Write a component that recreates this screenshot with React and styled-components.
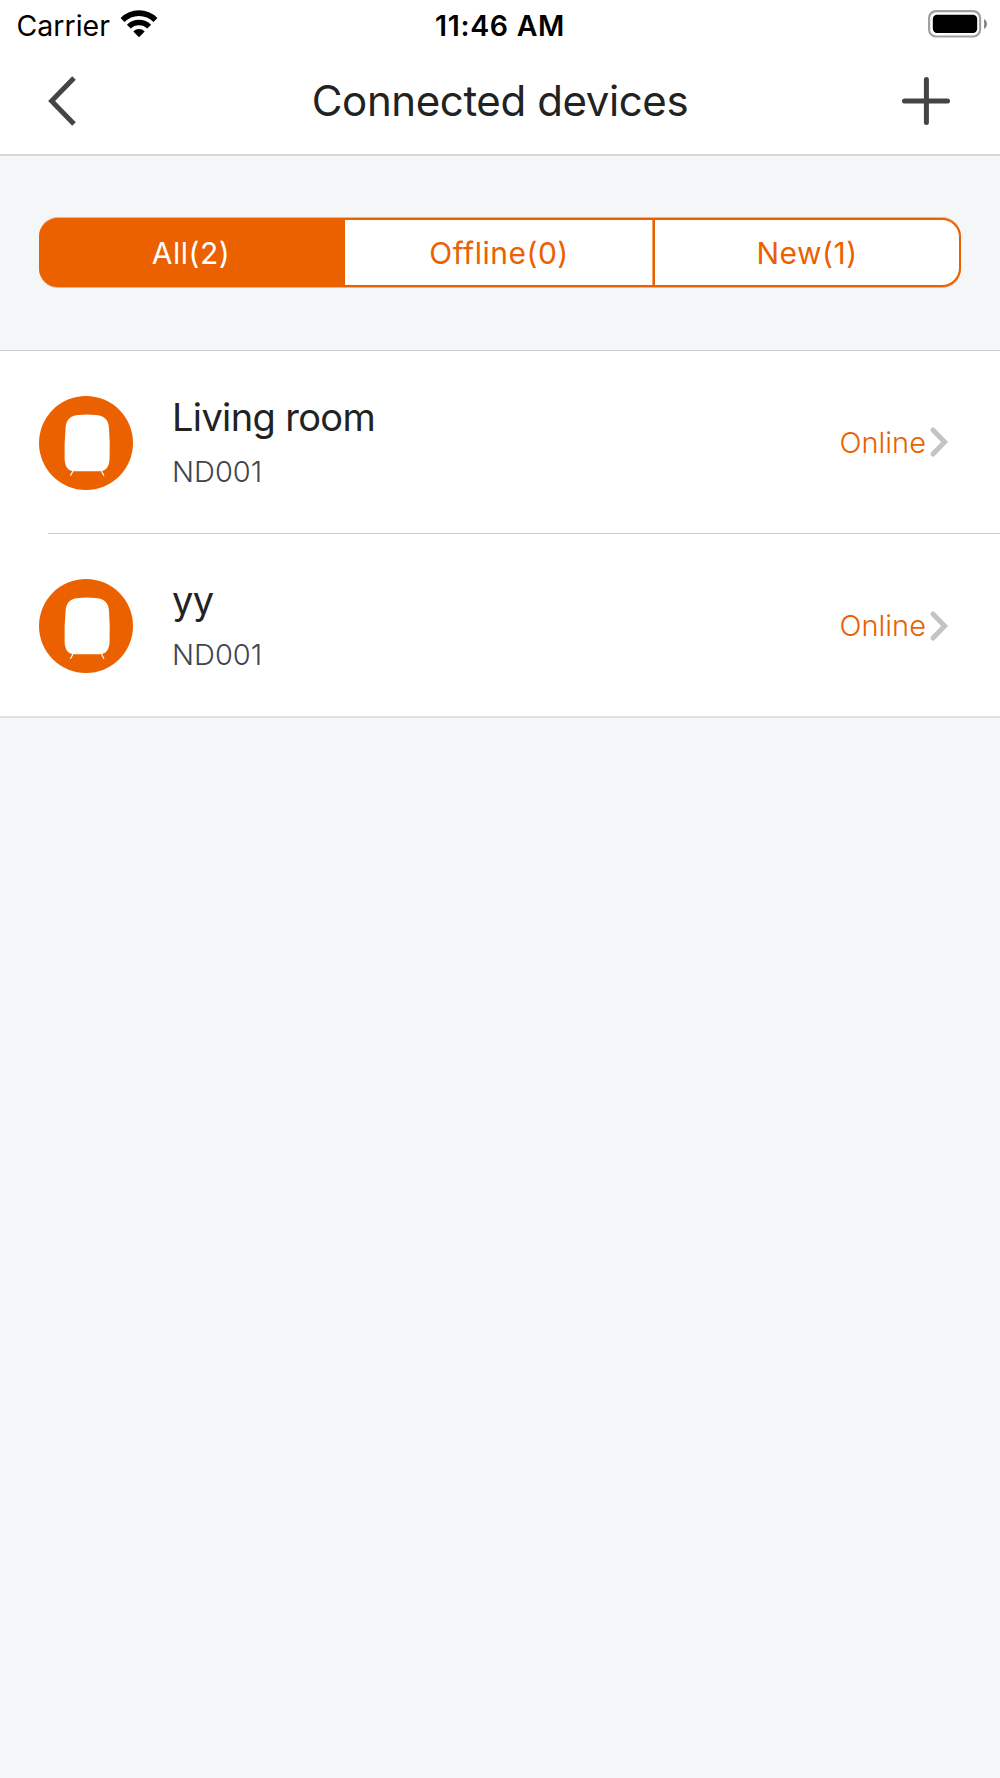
import React, { useState } from 'react';
import styled, { createGlobalStyle } from 'styled-components';

const TABS = [
  { id: 'all', label: 'All(2)' },
  { id: 'offline', label: 'Offline(0)' },
  { id: 'new', label: 'New(1)' },
];

const DEVICES = [
  { id: 1, name: 'Living room', model: 'ND001', status: 'Online' },
  { id: 2, name: 'yy', model: 'ND001', status: 'Online' },
];

function StatusBar() {
  return (
    <StatusRow>
      <Carrier>
        Carrier
        <WifiIcon viewBox="0 0 38 28">
          <path d="M0.6 8 A26 26 0 0 1 37.4 8 L33.6 11.9 A20.8 20.8 0 0 0 4.4 11.9 Z" />
          <path d="M6.9 14.7 A17 17 0 0 1 31.1 14.7 L27.3 18.6 A11.8 11.8 0 0 0 10.7 18.6 Z" />
          <path d="M13.3 21.4 A8 8 0 0 1 24.7 21.4 L19 27.2 Z" />
        </WifiIcon>
      </Carrier>
      <Clock>11:46 AM</Clock>
      <BatteryIcon viewBox="0 0 60 28">
        <rect x="1.1" y="1.1" width="51" height="25.4" rx="7" fill="none" stroke="#a0a0a0" strokeWidth="2.2" />
        <rect x="4.8" y="4.8" width="44.4" height="18.2" rx="4.2" />
        <path d="M56 9 Q59 10.6 59 14 Q59 17.4 56 19 Z" fill="#888" />
      </BatteryIcon>
    </StatusRow>
  );
}

function DeviceRow(props) {
  return (
    <Row>
      <DeviceIcon viewBox="0 0 94 94">
        <circle cx="47" cy="47" r="47" fill="#eb6100" />
        <path
          d="M40 19 Q48 18.2 56 19 C65 19.4 69.6 23.5 70 32 Q71.2 47 70.6 62 C70.4 71 67 75.3 60 75.3 H36 C29 75.3 25.8 71 25.6 62 Q25.2 47 26.6 32 C27 23.5 31.5 19.4 40 19 Z"
          fill="#fff"
        />
        <path d="M34 75 L31.4 79.8 M62.4 75 L65 79.8" stroke="#fff" strokeWidth="1.2" />
      </DeviceIcon>
      <RowBody>
        <Info>
          <Name>{props.name}</Name>
          <Model>{props.model}</Model>
        </Info>
        <Status>{props.status}</Status>
        <ChevronIcon viewBox="0 0 20 32">
          <path d="M4 4 L15.6 16 L4 28" />
        </ChevronIcon>
      </RowBody>
    </Row>
  );
}

function App() {
  const [activeTab, setActiveTab] = useState('all');

  return (
    <Screen>
      <GlobalStyle />
      <Header>
        <StatusBar />
        <NavBar>
          <NavButton aria-label="Back">
            <NavIcon viewBox="0 0 50 50" $cap="butt">
              <path d="M26 1.9 L3.6 25 L26 48.1" />
            </NavIcon>
          </NavButton>
          <Title>Connected devices</Title>
          <NavButton aria-label="Add device">
            <NavIcon viewBox="0 0 50 50" $cap="round">
              <path d="M2.5 25 H45.5 M24.4 3.4 V46.6" />
            </NavIcon>
          </NavButton>
        </NavBar>
      </Header>
      <Filter>
        <TabList>
          {TABS.map(tab => (
            <Tab key={tab.id} $active={tab.id === activeTab} onClick={() => setActiveTab(tab.id)}>
              {tab.label}
            </Tab>
          ))}
        </TabList>
      </Filter>
      <List>
        {DEVICES.map(device => (
          <DeviceRow key={device.id} {...device} />
        ))}
      </List>
    </Screen>
  );
}

const GlobalStyle = createGlobalStyle`
  * {
    box-sizing: border-box;
  }
  body {
    margin: 0;
    background: #f4f6f8;
    font-family: Inter, 'Noto Sans', sans-serif;
  }
  button {
    padding: 0;
    border: none;
    background: none;
    font-family: inherit;
  }
`;

const Screen = styled.div`
  min-height: 1778px;
`;

const Header = styled.header`
  height: 156px;
  background: #fff;
  border-bottom: 2px solid #d6d7d8;
`;

const StatusRow = styled.div`
  display: grid;
  grid-template-columns: 1fr auto 1fr;
  align-items: center;
  height: 51px;
  padding: 0 12px;
  color: #000;
`;

const Carrier = styled.span`
  display: flex;
  align-items: center;
  gap: 10px;
  padding-left: 4.5px;
  font-size: 28.5px;
`;

const WifiIcon = styled.svg`
  width: 38px;
  height: 28px;
  margin-top: -4px;
`;

const Clock = styled.span`
  font-size: 28.5px;
  font-weight: 600;
  letter-spacing: 0.7px;
`;

const BatteryIcon = styled.svg`
  justify-self: end;
  width: 60px;
  height: 28px;
  margin-top: -3px;
`;

const NavBar = styled.nav`
  display: flex;
  align-items: center;
  justify-content: space-between;
  height: 99px;
  padding: 0 48px;
`;

const NavButton = styled.button`
  width: 50px;
  height: 50px;
`;

const NavIcon = styled.svg`
  display: block;
  width: 50px;
  height: 50px;
  fill: none;
  stroke: #444;
  stroke-width: 5;
  stroke-linecap: ${props => props.$cap};
`;

const Title = styled.h1`
  margin: 0;
  font-size: 42px;
  font-weight: 400;
  letter-spacing: -0.4px;
  color: #222;
`;

const Filter = styled.div`
  height: 194px;
  padding: 62px 39px 0;
`;

const TabList = styled.div`
  display: grid;
  grid-template-columns: 304px 1fr 304px;
  height: 69px;
  overflow: hidden;
  background: #eb6100;
  border: 2px solid #eb6100;
  border-radius: 19px;
  box-shadow: 0 1px rgba(235, 97, 0, 0.45), 0 -1px rgba(235, 97, 0, 0.45);
`;

const Tab = styled.button`
  font-size: 30px;
  letter-spacing: 0.5px;
  color: ${props => (props.$active ? '#fff' : '#eb6100')};
  background: ${props => (props.$active ? '#eb6100' : '#fff')};

  &:first-child {
    padding-right: 4px;
  }

  &:nth-child(2) {
    border-right: 2px solid #eb6100;
    box-shadow: inset -1px 0 rgba(235, 97, 0, 0.6);
  }
`;

const List = styled.div`
  background: #fff;
  border-top: 1px solid #ccc;
  border-bottom: 2px solid #dfdfe0;
`;

const Row = styled.div`
  display: flex;
  align-items: center;
  height: 182px;
  padding: 0 51px 0 39px;

  & + & {
    height: 183px;
    padding-top: 2px;
    background: linear-gradient(#ccc, #ccc) no-repeat 48px 0 / 100% 1px;
  }
`;

const DeviceIcon = styled.svg`
  flex: none;
  width: 94px;
  height: 94px;
  margin-top: 1px;
`;

const RowBody = styled.div`
  display: flex;
  flex: 1;
  align-items: center;
  margin-left: 39px;
`;

const Info = styled.div`
  flex: 1;
  padding-top: 2px;
`;

const Name = styled.div`
  font-size: 38px;
  line-height: 56px;
  letter-spacing: -0.65px;
  color: #222;
`;

const Model = styled.div`
  margin-top: 1px;
  font-size: 29px;
  font-weight: 300;
  line-height: 52px;
  color: #3d464f;
`;

const Status = styled.span`
  font-size: 29px;
  font-weight: 300;
  color: #eb6100;
`;

const ChevronIcon = styled.svg`
  width: 20px;
  height: 32px;
  margin-left: 3px;
  fill: none;
  stroke: #c4c4c6;
  stroke-width: 5;
  stroke-linecap: round;
`;

export default App;
